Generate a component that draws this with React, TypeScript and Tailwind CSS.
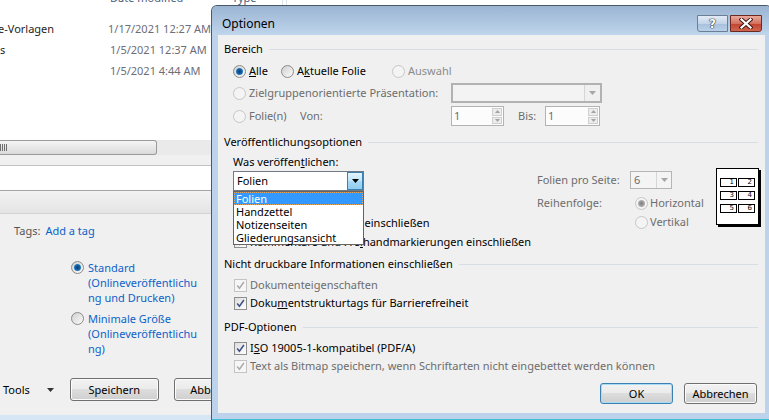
import React from "react";

function Radio({ checked = false, disabled = false }: { checked?: boolean; disabled?: boolean }) {
  return (
    <span
      className={`flex h-[13px] w-[13px] shrink-0 items-center justify-center rounded-full border ${
        disabled ? "border-[#c6c6c6] bg-[#f4f4f4]" : "border-[#8b8b8b] bg-[linear-gradient(135deg,#d0d0d0,#fbfbfb)]"
      }`}
    >
      {checked && (
        <span
          className={`h-[7px] w-[7px] rounded-full ${
            disabled
              ? "bg-[radial-gradient(circle,#7d7d7d_0%,#a9a9a9_60%,#dcdcdc_100%)]"
              : "bg-[radial-gradient(circle,#0b3c78_0%,#1767ad_55%,#6cc4f0_100%)]"
          }`}
        />
      )}
    </span>
  );
}

function Check({ disabled = false }: { disabled?: boolean }) {
  return (
    <span
      className={`flex h-[13px] w-[13px] shrink-0 items-center justify-center border ${
        disabled ? "border-[#c4c4c4] bg-[#f6f6f6]" : "border-[#8e8f8f] bg-[linear-gradient(135deg,#dcdcdc,#ffffff)]"
      }`}
    >
      <svg width="9" height="9" viewBox="0 0 9 9">
        <path d="M1.2 4.6 L3.4 7.2 L7.9 1" fill="none" stroke={disabled ? "#ababab" : "#3d4f86"} strokeWidth="1.5" />
      </svg>
    </span>
  );
}

function Group({ title }: { title: string }) {
  return (
    <div className="flex h-4 items-center pl-[6px] pr-[7px]">
      <span className="whitespace-nowrap">{title}</span>
      <span className="ml-[6px] h-px flex-1 bg-[#d5dfe5]" />
    </div>
  );
}

function Arrow({ color }: { color: string }) {
  return (
    <svg width="7" height="4" viewBox="0 0 7 4">
      <path d="M0 0 H7 L3.5 4 Z" fill={color} />
    </svg>
  );
}

function Spin({ width }: { width: string }) {
  return (
    <div className={`flex h-[20px] ${width} border border-[#b3b3b3] bg-[#fcfcfc]`}>
      <span className="flex-1 pl-[2px] leading-[18px] text-[#6d6d6d]">1</span>
      <div className="flex w-[12px] flex-col gap-px p-px">
        <span className="flex flex-1 items-center justify-center border border-[#cfcfcf] bg-[#ececec]">
          <svg width="5" height="3" viewBox="0 0 5 3">
            <path d="M0 3 H5 L2.5 0 Z" fill="#a3a3a3" />
          </svg>
        </span>
        <span className="flex flex-1 items-center justify-center border border-[#cfcfcf] bg-[#ececec]">
          <svg width="5" height="3" viewBox="0 0 5 3">
            <path d="M0 0 H5 L2.5 3 Z" fill="#a3a3a3" />
          </svg>
        </span>
      </div>
    </div>
  );
}

function WinButton({ label, isDefault = false, className = "" }: { label: string; isDefault?: boolean; className?: string }) {
  return (
    <div
      className={`flex items-center justify-center rounded-[3px] border ${
        isDefault
          ? "border-[#3c7fb1] shadow-[inset_0_0_0_1px_#a9dcf6]"
          : "border-[#707070] shadow-[inset_0_0_0_1px_#fbfbfb]"
      } bg-[linear-gradient(#f2f2f2_0%,#ebebeb_49%,#dddddd_50%,#cfcfcf_100%)] ${className}`}
    >
      {label}
    </div>
  );
}

function PreviewGrid() {
  const rows = [
    ["1", "2"],
    ["3", "4"],
    ["5", "6"],
  ];
  return (
    <div className="flex h-[57px] w-[43px] flex-col items-center gap-[4px] border border-black bg-white pt-[9px] shadow-[2px_2px_0_#000]">
      {rows.map((row) => (
        <div key={row[0]} className="flex gap-px">
          {row.map((n) => (
            <span
              key={n}
              className="flex h-[9px] w-[17px] items-center justify-end border border-black pr-[2px] font-['DejaVu_Sans',sans-serif] text-[7px] leading-[7px]"
            >
              {n}
            </span>
          ))}
        </div>
      ))}
    </div>
  );
}

function BackgroundWindow() {
  const files = [
    { name: "e-Vorlagen", shift: "-ml-[2px]", date: "1/17/2021 12:27 AM" },
    { name: "s", shift: "", date: "1/5/2021 12:37 AM" },
    { name: "", shift: "", date: "1/5/2021 4:44 AM" },
  ];
  return (
    <div className="flex h-full w-full flex-col bg-[#f0f0f0]">
      <div className="h-[140px] overflow-hidden bg-white">
        <div className="-mt-[12px] flex h-[20px] items-center text-[#4c607a]">
          <span className="ml-[110px] w-[122px]">Date modified</span>
          <span className="w-[50px]">Type</span>
          <span className="h-full w-[5px] border-x border-[#dde3ea]" />
        </div>
        <div className="pt-[10px]">
          {files.map((f) => (
            <div key={f.date} className="flex h-[21px] items-center">
              <span className={`w-[110px] ${f.shift} text-[#1e1e1e]`}>{f.name}</span>
              <span className="text-[#6d6d78]">{f.date}</span>
            </div>
          ))}
        </div>
      </div>

      <div className="flex h-[15px] bg-[#eaeaea]">
        <div className="flex h-[15px] w-[157px] items-center rounded-r-[3px] border border-l-0 border-[#9a9a9a] bg-[linear-gradient(#f5f5f5,#dadada)]">
          <div className="flex h-[7px] gap-px">
            {[0, 1, 2, 3].map((i) => (
              <span key={i} className="h-full w-px bg-[#6e6e6e]" />
            ))}
          </div>
        </div>
      </div>

      <div className="h-[10px]" />
      <div className="h-[25px] border-t border-[#c2c2c2] bg-white" />
      <div className="h-[24px] border-t border-[#a5a5a5] border-b border-b-[#d3d3d3] bg-[linear-gradient(#f3f3f3,#e4e4e4)]" />

      <div className="mt-[9px] flex h-4 items-center pl-[14px]">
        <span className="text-[#555555]">Tags:</span>
        <span className="ml-[5px] text-[#0b62c9]">Add a tag</span>
      </div>

      <div className="mt-[21px] flex pl-[71px]">
        <span className="mt-[1px]">
          <Radio checked />
        </span>
        <div className="ml-[4px] leading-[15px] text-[#0b62c9]">
          <div>Standard</div>
          <div>(Onlineveröffentlichu</div>
          <div>ng und Drucken)</div>
        </div>
      </div>
      <div className="mt-[6px] flex pl-[71px]">
        <span className="mt-[1px]">
          <Radio />
        </span>
        <div className="ml-[4px] leading-[15px] text-[#0b62c9]">
          <div>Minimale Größe</div>
          <div>(Onlineveröffentlichu</div>
          <div>ng)</div>
        </div>
      </div>

      <div className="mt-[22px] flex h-[23px] items-center">
        <span className="ml-[3px]">Tools</span>
        <span className="ml-[17px]">
          <Arrow color="#333" />
        </span>
        <WinButton label="Speichern" className="ml-[16px] h-[23px] w-[89px]" />
        <WinButton label="Abbrechen" className="ml-[15px] h-[23px] w-[89px]" />
      </div>

      <div className="mt-auto h-[5px] bg-[#d7e6f5]" />
    </div>
  );
}

function OptionsDialog() {
  return (
    <div className="absolute left-[211px] top-[5px] w-[561px] rounded-t-[6px] border border-b-[3px] border-[#4a5868] border-b-[#3fbfd8] bg-[#bcd3eb]">
      <div className="flex h-[29px] rounded-t-[5px] bg-[linear-gradient(#9ab4d2,#bfd5ec)]">
        <span className="pl-[10px] pt-[10px] text-[12px] leading-4">Optionen</span>
        <div className="ml-auto mr-[9px] mt-[9px] flex h-[17px] gap-[2px]">
          <div className="flex w-[31px] items-center justify-center rounded-bl-[3px] border border-[#6c7e94] bg-[linear-gradient(#e2ebf5,#c3d4e8_50%,#a9c0dc_51%,#b9d0ea)]">
            <span className="font-['DejaVu_Sans',sans-serif] text-[12px] font-bold leading-none text-white [text-shadow:0_0_1px_#222,0_0_1px_#222,0_0_1px_#222]">
              ?
            </span>
          </div>
          <div className="flex w-[32px] items-center justify-center rounded-br-[3px] border border-[#6a2a22] bg-[linear-gradient(#e9a99b,#d4715f_50%,#c2412f_51%,#d0674f)]">
            <svg width="14" height="11" viewBox="0 0 14 11">
              <path d="M2.5 1.5 L11.5 9.5 M11.5 1.5 L2.5 9.5" stroke="#3b1410" strokeWidth="4" strokeLinecap="square" />
              <path d="M2.5 1.5 L11.5 9.5 M11.5 1.5 L2.5 9.5" stroke="#ffffff" strokeWidth="2.2" strokeLinecap="square" />
            </svg>
          </div>
        </div>
      </div>

      <div className="mx-[6px] h-[378px] bg-[#f0f0f0] pt-[6px] text-black">
        <Group title="Bereich" />

        <div className="mt-[4px] flex h-[20px] items-center pl-[15px]">
          <div className="flex w-[48px] items-center">
            <Radio checked />
            <span className="ml-[3px]">
              <span className="underline">A</span>lle
            </span>
          </div>
          <div className="flex w-[111px] items-center">
            <Radio />
            <span className="ml-[3px]">
              A<span className="underline">k</span>tuelle Folie
            </span>
          </div>
          <div className="flex items-center text-[#8c8c8c]">
            <Radio disabled />
            <span className="ml-[3px]">Auswahl</span>
          </div>
        </div>

        <div className="mt-[2px] flex h-[20px] items-center pl-[15px] text-[#6d6d6d]">
          <div className="flex w-[218px] items-center">
            <Radio disabled />
            <span className="ml-[3px] whitespace-nowrap">Zielgruppenorientierte Präsentation:</span>
          </div>
          <div className="flex h-[20px] w-[151px] border-2 border-[#b2b2b2] bg-[#f3f3f3]">
            <span className="flex-1" />
            <span className="flex w-[16px] items-center justify-center border-l border-[#d6d6d6] bg-[#f0f0f0]">
              <Arrow color="#a6a6a6" />
            </span>
          </div>
        </div>

        <div className="mt-[3px] flex h-[20px] items-center pl-[15px] text-[#6d6d6d]">
          <div className="flex w-[67px] items-center">
            <Radio disabled />
            <span className="ml-[3px]">Folie(n)</span>
          </div>
          <span className="w-[151px]">Von:</span>
          <Spin width="w-[53px]" />
          <span className="ml-[14px] w-[27px]">Bis:</span>
          <Spin width="w-[55px]" />
        </div>

        <div className="mt-[8px]">
          <Group title="Veröffentlichungsoptionen" />
        </div>

        <div className="flex">
          <div className="w-[319px] pl-[15px]">
            <div className="mt-[4px] h-4">
              Was veröffen<span className="underline">t</span>lichen:
            </div>
            <div className="relative mt-[1px] flex h-[20px] w-[131px] border border-[#6f7a86] bg-white">
              <span className="flex-1 pl-[3px] leading-[18px]">Folien</span>
              <span className="flex w-[16px] items-center justify-center border border-[#3c7fb1] bg-[linear-gradient(#e3f4fc,#bde6fd_50%,#a7d9f5_51%,#8fcdf0)]">
                <Arrow color="#000" />
              </span>
              <div className="absolute left-[-1px] top-[19px] z-10 w-[131px] border border-[#646464] bg-white">
                <div className="h-[13px] border border-dotted border-[#e2a35c] bg-[#3399ff] pl-[1px] leading-[11px] text-white">
                  Folien
                </div>
                <div className="h-[13px] pl-[2px] leading-[13px]">Handzettel</div>
                <div className="h-[13px] pl-[2px] leading-[13px]">Notizenseiten</div>
                <div className="h-[13px] pl-[2px] leading-[13px]">Gliederungsansicht</div>
              </div>
            </div>
            <div className="mt-[22px] flex h-[19px] items-center pl-px">
              <Check />
              <span className="ml-[3px] whitespace-nowrap">Ausgeblendete Folien einschließen</span>
            </div>
            <div className="flex h-[19px] items-center pl-px">
              <Check />
              <span className="ml-[3px] whitespace-nowrap">
                Kommentare und Fre<span className="underline">i</span>handmarkierungen einschließen
              </span>
            </div>
          </div>

          <div className="flex flex-1 pr-[6px]">
            <div className="w-[177px] text-[#6d6d6d]">
              <div className="mt-[21px] flex h-[18px] items-center">
                <span className="w-[93px]">Folien pro Seite:</span>
                <div className="flex h-[18px] w-[42px] border border-[#b5b5b5] bg-[#f4f4f4]">
                  <span className="flex-1 pl-[3px] leading-[16px]">6</span>
                  <span className="flex w-[15px] items-center justify-center border-l border-[#d6d6d6]">
                    <Arrow color="#a6a6a6" />
                  </span>
                </div>
              </div>
              <div className="mt-[5px] flex h-[18px] items-center">
                <span className="w-[98px]">Reihenfolge:</span>
                <Radio checked disabled />
                <span className="ml-[2px]">Horizontal</span>
              </div>
              <div className="mt-px flex h-[18px] items-center pl-[98px]">
                <Radio disabled />
                <span className="ml-[2px]">Vertikal</span>
              </div>
            </div>
            <div className="ml-auto mt-[18px]">
              <PreviewGrid />
            </div>
          </div>
        </div>

        <div className="mt-[5px]">
          <Group title="Nicht druckbare Informationen einschließen" />
        </div>
        <div className="mt-[4px] flex h-[18px] items-center pl-[16px] text-[#6d6d6d]">
          <Check disabled />
          <span className="ml-[3px]">Dokumenteigenschaften</span>
        </div>
        <div className="flex h-[18px] items-center pl-[16px]">
          <Check />
          <span className="ml-[3px]">
            Doku<span className="underline">m</span>entstrukturtags für Barrierefreiheit
          </span>
        </div>

        <div className="mt-[7px]">
          <Group title="PDF-Optionen" />
        </div>
        <div className="mt-[4px] flex h-[18px] items-center pl-[16px]">
          <Check />
          <span className="ml-[3px]">
            I<span className="underline">S</span>O 19005-1-kompatibel (PDF/A)
          </span>
        </div>
        <div className="flex h-[18px] items-center pl-[16px] text-[#6d6d6d]">
          <Check disabled />
          <span className="ml-[3px] whitespace-nowrap">
            Text als Bitmap speichern, wenn Schriftarten nicht eingebettet werden können
          </span>
        </div>

        <div className="mt-[8px] flex h-[21px] justify-end gap-[11px] pr-[8px]">
          <WinButton label="OK" isDefault className="w-[73px]" />
          <WinButton label="Abbrechen" className="w-[73px]" />
        </div>
      </div>
      <div className="h-[6px]" />
    </div>
  );
}

export default function App() {
  return (
    <div className="relative h-[420px] w-[769px] overflow-hidden font-['Noto_Sans',sans-serif] text-[11px] leading-4 text-black">
      <BackgroundWindow />
      <OptionsDialog />
    </div>
  );
}
